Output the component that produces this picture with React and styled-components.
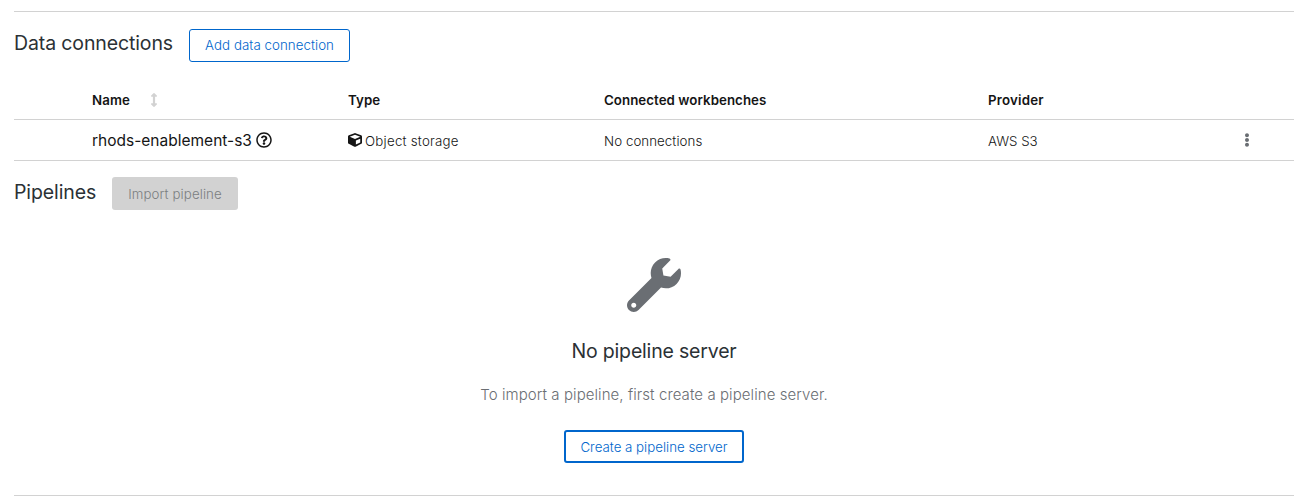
import React from 'react';
import styled, { createGlobalStyle } from 'styled-components';
import { FaArrowsAltV, FaCube, FaEllipsisV, FaRegQuestionCircle, FaWrench } from 'react-icons/fa';

const GlobalStyle = createGlobalStyle`
  * { box-sizing: border-box; }
  body {
    margin: 0;
    background: #fff;
    color: #151515;
    font-family: Inter, "Liberation Sans", sans-serif;
    font-size: 14px;
    overflow: hidden;
  }
`;

const Page = styled.main`
  height: 503px;
  padding: 11px 9px 0 14px;
`;

const Section = styled.section`
  height: ${({ $height }) => $height}px;
  border-top: ${({ $divided }) => ($divided ? '1px solid #d2d2d2' : 'none')};
  padding-top: ${({ $top }) => $top}px;
`;

const SectionHeader = styled.header`
  display: flex;
  align-items: flex-start;
  height: 33px;
`;

const Fitted = styled.span`
  display: inline-block;
  white-space: nowrap;
  letter-spacing: ${({ $track }) => $track || 0}px;
  padding-top: ${({ $drop }) => $drop || 0}px;
`;

const Title = styled.h2`
  margin: 0;
  flex: none;
  width: ${({ $width }) => ($width ? `${$width}px` : 'auto')};
  color: #2b3135;
  font-size: 19.5px;
  font-weight: 400;
  line-height: 28px;
  white-space: nowrap;
`;

const Button = styled.button`
  width: ${({ $width }) => $width}px;
  height: 33px;
  padding: 0 0 ${({ $lift }) => $lift || 0}px;
  border: ${({ $border }) => $border}px solid #06c;
  border-radius: 3px;
  background: #fff;
  color: #06c;
  font: 350 13.3px/20px Inter, "Liberation Sans", sans-serif;

  &:disabled {
    background: #d2d2d2;
    color: #7b7e81;
  }
`;

const Table = styled.div`
  margin-top: 18px;
`;

const Row = styled.div`
  display: grid;
  grid-template-columns: 62px 256px 256px 384px 1fr 94px;
  align-items: center;
  height: ${({ $height }) => $height}px;
  border-bottom: 1px solid #d2d2d2;
`;

const Cell = styled.div`
  display: flex;
  align-items: center;
  gap: ${({ $gap }) => $gap || 0}px;
  padding-left: 16px;
  line-height: 20px;
  font-size: ${({ $size }) => $size || 13.3}px;
  font-weight: ${({ $weight }) => $weight || 350};

  svg { flex: none; }
`;

const ActionCell = styled(Cell)`
  justify-content: center;
  padding: 0;
  color: #6a6e73;
`;

const EmptyState = styled.div`
  display: flex;
  flex-direction: column;
  align-items: center;
  padding-top: 48px;

  > svg { color: #6a6e73; }
  ${Title} { margin-top: 25px; }
`;

const Message = styled.p`
  margin: 18px 0 23px;
  color: #6a6e73;
  font-size: 15px;
  font-weight: 350;
  line-height: 24px;
`;

export default function App() {
  return (
    <>
      <GlobalStyle />
      <Page>
        <Section $height={150} $divided $top={17}>
          <SectionHeader>
            <Title $width={175}><Fitted $track={-0.12}>Data connections</Fitted></Title>
            <Button $width={161} $border={1} $lift={2}><Fitted $track={0.05}>Add data connection</Fitted></Button>
          </SectionHeader>
          <Table>
            <Row $height={40}>
              <Cell />
              <Cell $weight={600} $gap={17}><Fitted $track={0.1}>Name</Fitted><FaArrowsAltV size={14} color="#d2d2d2" /></Cell>
              <Cell $weight={600}><Fitted $track={0.1}>Type</Fitted></Cell>
              <Cell $weight={600}><Fitted $track={0.05}>Connected workbenches</Fitted></Cell>
              <Cell $weight={600}><Fitted $track={0.2}>Provider</Fitted></Cell>
            </Row>
            <Row $height={41}>
              <Cell />
              <Cell $size={15.5} $weight={400} $gap={4}><Fitted $drop={2}>rhods-enablement-s3</Fitted><FaRegQuestionCircle size={16} /></Cell>
              <Cell $gap={3}><FaCube size={14} /><Fitted $drop={2} $track={0.24}>Object storage</Fitted></Cell>
              <Cell><Fitted $drop={2} $track={0.06}>No connections</Fitted></Cell>
              <Cell><Fitted $drop={2}>AWS S3</Fitted></Cell>
              <ActionCell><FaEllipsisV size={14} /></ActionCell>
            </Row>
          </Table>
        </Section>
        <Section $height={334} $top={16}>
          <SectionHeader>
            <Title $width={98}><Fitted $track={-0.1} $drop={1}>Pipelines</Fitted></Title>
            <Button $width={126} $border={0} disabled><Fitted $track={0.1}>Import pipeline</Fitted></Button>
          </SectionHeader>
          <EmptyState>
            <FaWrench size={54} />
            <Title><Fitted $track={-0.18}>No pipeline server</Fitted></Title>
            <Message><Fitted $track={0.08}>To import a pipeline, first create a pipeline server.</Fitted></Message>
            <Button $width={180} $border={2}><Fitted>Create a pipeline server</Fitted></Button>
          </EmptyState>
        </Section>
        <Section $height={8} $divided $top={0} />
      </Page>
    </>
  );
}
